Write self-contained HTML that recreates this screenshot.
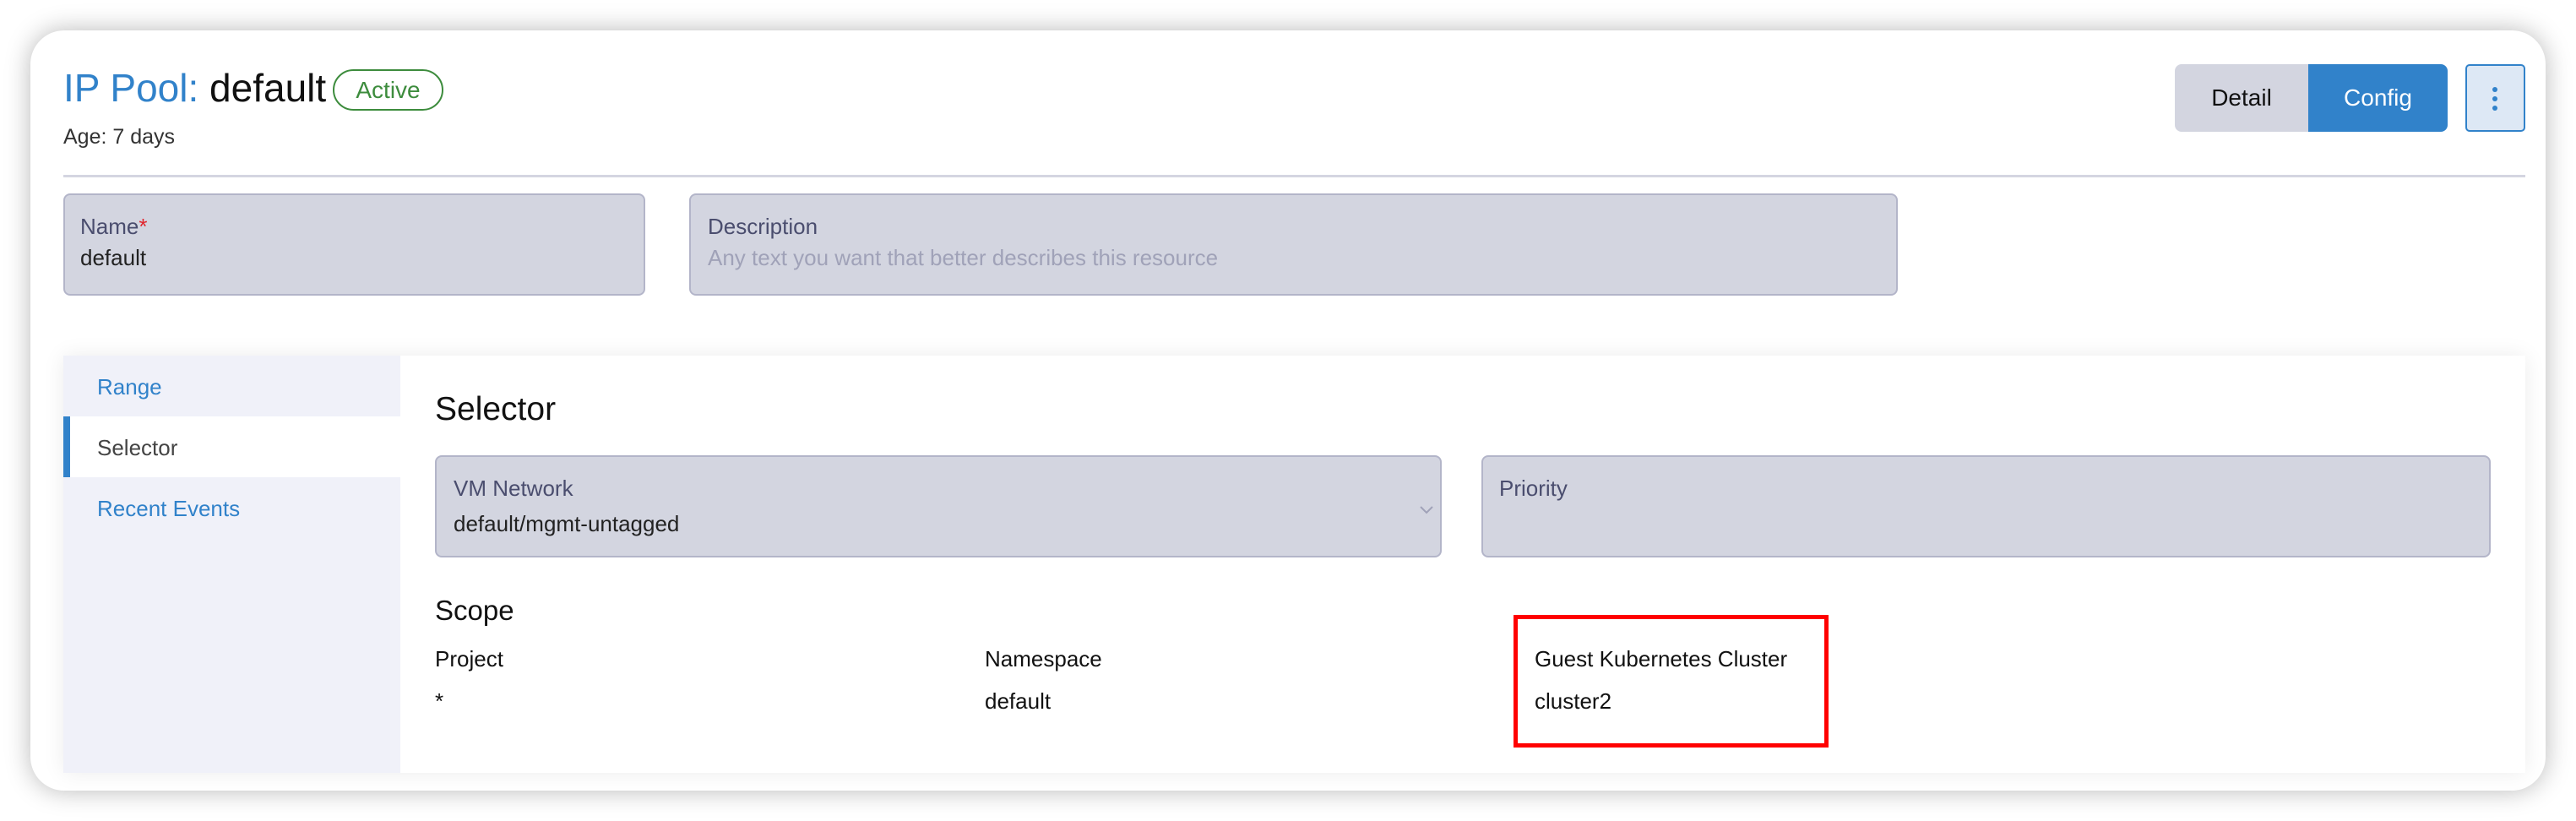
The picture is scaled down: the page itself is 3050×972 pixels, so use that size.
<!DOCTYPE html>
<html><head><meta charset="utf-8"><style>
*{margin:0;padding:0;box-sizing:border-box}
body{width:3050px;height:972px;background:#fff;font-family:"Liberation Sans",sans-serif;position:relative;overflow:hidden}
.a{position:absolute;white-space:nowrap}
.card{position:absolute;left:36px;top:36px;width:2978px;height:900px;background:#fff;border-radius:40px;box-shadow:0 0 30px rgba(0,0,0,0.28)}
.field{position:absolute;background:#d3d5e0;border:2px solid #b3b5c9;border-radius:8px}
.lbl{color:#4a4d6e;font-size:26px}
.val{color:#222;font-size:26px}
</style></head><body>
<div class="card"></div>
<div class="a" style="left:75px;top:76px;font-size:46px;line-height:56px"><span style="color:#3182ca">IP Pool:</span> <span style="color:#111">default</span></div>
<div class="a" style="left:394px;top:82px;width:131px;height:49px;border:2px solid #3d8c3d;border-radius:25px;color:#3d8c3d;font-size:28px;line-height:45px;text-align:center">Active</div>
<div class="a" style="left:75px;top:148px;font-size:25px;color:#333">Age: 7 days</div>
<div class="a" style="left:75px;top:207px;width:2915px;height:3px;background:#d4d5e1"></div>
<div class="a" style="left:2575px;top:76px;width:323px;height:80px;border-radius:8px;overflow:hidden;display:flex;font-size:28px">
<div style="width:158px;background:#d3d5e0;color:#111;text-align:center;line-height:80px">Detail</div>
<div style="flex:1;background:#3182ca;color:#fff;text-align:center;line-height:80px">Config</div></div>
<div class="a" style="left:2919px;top:76px;width:71px;height:80px;border:2px solid #3182ca;border-radius:5px;background:#dde8f5">
<div style="position:absolute;left:30px;top:25px;width:6px;height:6px;border-radius:3px;background:#3182ca"></div>
<div style="position:absolute;left:30px;top:36px;width:6px;height:6px;border-radius:3px;background:#3182ca"></div>
<div style="position:absolute;left:30px;top:47px;width:6px;height:6px;border-radius:3px;background:#3182ca"></div></div>

<div class="field" style="left:75px;top:229px;width:689px;height:121px"></div>
<div class="a lbl" style="left:95px;top:253px">Name<span style="color:#e0242c">*</span></div>
<div class="a val" style="left:95px;top:290px">default</div>
<div class="field" style="left:816px;top:229px;width:1431px;height:121px"></div>
<div class="a lbl" style="left:838px;top:253px">Description</div>
<div class="a" style="left:838px;top:290px;font-size:26px;color:#a0a2b8">Any text you want that better describes this resource</div>

<div class="a" style="left:75px;top:421px;width:2915px;height:494px;background:#fff;box-shadow:0 0 24px rgba(0,0,0,0.08)"></div>
<div class="a" style="left:75px;top:421px;width:399px;height:494px;background:#f0f1f9"></div>
<div class="a" style="left:75px;top:493px;width:399px;height:72px;background:#fff"></div>
<div class="a" style="left:75px;top:493px;width:8px;height:72px;background:#3182ca"></div>
<div class="a" style="left:115px;top:443px;font-size:26px;color:#3182ca">Range</div>
<div class="a" style="left:115px;top:515px;font-size:26px;color:#444">Selector</div>
<div class="a" style="left:115px;top:587px;font-size:26px;color:#3182ca">Recent Events</div>

<div class="a" style="left:515px;top:463px;font-size:39px;color:#111">Selector</div>
<div class="field" style="left:515px;top:539px;width:1192px;height:121px"></div>
<div class="a lbl" style="left:537px;top:563px">VM Network</div>
<div class="a val" style="left:537px;top:605px">default/mgmt-untagged</div>
<svg class="a" style="left:1680px;top:598px" width="18" height="12"><path d="M2 2 L9 9 L16 2" stroke="#a0a2b8" stroke-width="2" fill="none"/></svg>
<div class="field" style="left:1754px;top:539px;width:1195px;height:121px"></div>
<div class="a lbl" style="left:1775px;top:563px">Priority</div>

<div class="a" style="left:515px;top:704px;font-size:33px;color:#111">Scope</div>
<div class="a" style="left:515px;top:765px;font-size:26px;color:#111">Project</div>
<div class="a" style="left:515px;top:815px;font-size:26px;color:#111">*</div>
<div class="a" style="left:1166px;top:765px;font-size:26px;color:#111">Namespace</div>
<div class="a" style="left:1166px;top:815px;font-size:26px;color:#111">default</div>
<div class="a" style="left:1817px;top:765px;font-size:26px;color:#111">Guest Kubernetes Cluster</div>
<div class="a" style="left:1817px;top:815px;font-size:26px;color:#111">cluster2</div>
<div class="a" style="left:1792px;top:728px;width:373px;height:157px;border:5px solid #f00"></div>
</body></html>
